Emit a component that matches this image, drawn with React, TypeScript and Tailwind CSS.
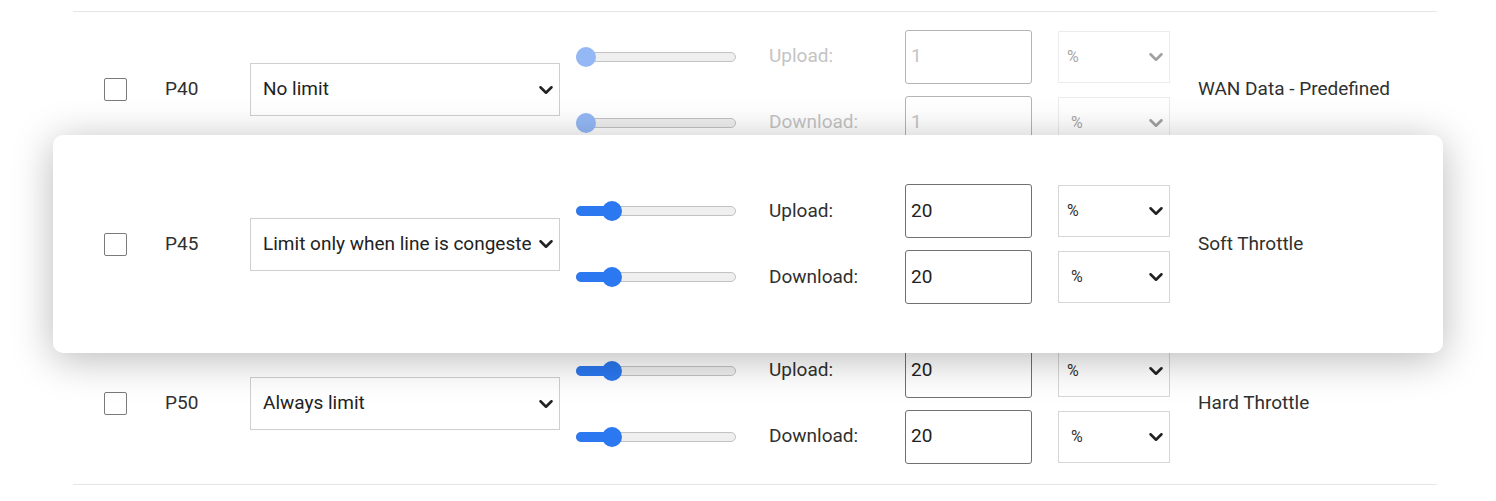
import { ChevronDown } from 'lucide-react'

type Sub = { label: string; value: string; pct: number }

type Row = {
  id: string
  mode: string
  desc: string
  muted?: boolean
  subs: Sub[]
}

const ROWS: Row[] = [
  {
    id: 'P40',
    mode: 'No limit',
    desc: 'WAN Data - Predefined',
    muted: true,
    subs: [
      { label: 'Upload:', value: '1', pct: 0 },
      { label: 'Download:', value: '1', pct: 0 },
    ],
  },
  {
    id: 'P45',
    mode: 'Limit only when line is congested',
    desc: 'Soft Throttle',
    subs: [
      { label: 'Upload:', value: '20', pct: 20 },
      { label: 'Download:', value: '20', pct: 20 },
    ],
  },
  {
    id: 'P50',
    mode: 'Always limit',
    desc: 'Hard Throttle',
    subs: [
      { label: 'Upload:', value: '20', pct: 20 },
      { label: 'Download:', value: '20', pct: 20 },
    ],
  },
]

function Slider({ pct, muted }: { pct: number; muted?: boolean }) {
  // thumb center sits 10px from the track start at 0%
  const x = 10 + (130 * pct) / 100
  return (
    <div className="relative w-[160px] h-[20px] flex items-center">
      <div className="w-full h-[10px] rounded-full border border-[#c2c2c2] bg-[#efefef]" />
      {!muted && (
        <div
          className="absolute left-0 h-[10px] rounded-l-full bg-[#2b78f0]"
          style={{ width: x }}
        />
      )}
      <div
        className={`absolute top-0 w-[20px] h-[20px] rounded-full ${muted ? 'bg-[#94b8f6]' : 'bg-[#2b78f0]'}`}
        style={{ left: x - 10 }}
      />
    </div>
  )
}

function SubRow({ sub, muted, idx }: { sub: Sub; muted?: boolean; idx: number }) {
  return (
    <div className="flex items-center">
      <Slider pct={sub.pct} muted={muted} />
      <span className={`ml-[33px] w-[136px] ${muted ? 'text-[#c4c4c4]' : 'text-[#303030]'}`}>{sub.label}</span>
      <div
        className={`w-[127px] h-[54px] rounded-[3px] border flex items-center pl-[5px] ${
          muted ? 'border-[#b4b4b4] text-[#c4c4c4]' : 'border-[#707070] text-[#222]'
        }`}
      >
        {sub.value}
      </div>
      <div
        className={`ml-[26px] w-[112px] h-[52px] border flex items-center justify-between pr-[2px] ${
          idx === 0 ? 'pl-[8px]' : 'pl-[12px]'
        } ${muted ? 'border-[#ececec] text-[#a8a8a8]' : 'border-[#d6d6d6] text-[#333]'}`}
      >
        <span className="text-[16px]">%</span>
        <ChevronDown size={22} strokeWidth={2.8} className={muted ? 'text-[#a0a0a0]' : 'text-[#222]'} />
      </div>
    </div>
  )
}

function RowContent({ row }: { row: Row }) {
  return (
    <>
      <div className="w-[23px] h-[23px] border-[1.5px] border-[#7a7a7a] rounded-[2px] bg-white shrink-0" />
      <span className="ml-[38px] w-[85px] text-[#303030]">{row.id}</span>
      <div className="w-[310px] h-[53px] border border-[#cfcfcf] bg-white flex items-center pl-[12px] pr-[2px] shrink-0">
        <span className="flex-1 overflow-hidden whitespace-nowrap text-[#222]">{row.mode}</span>
        <ChevronDown size={22} strokeWidth={2.8} className="text-[#222] ml-[4px] shrink-0" />
      </div>
      <div className="ml-[16px] flex flex-col gap-[12px]">
        {row.subs.map((s, i) => (
          <SubRow key={i} sub={s} muted={row.muted} idx={i} />
        ))}
      </div>
      <span className="ml-[28px] text-[#303030]">{row.desc}</span>
    </>
  )
}

export default function App() {
  return (
    <div
      className="w-[1496px] h-[501px] bg-white overflow-hidden text-[19px]"
      style={{ fontFamily: 'Roboto, "Noto Sans", sans-serif' }}
    >
      <div className="ml-[73px] w-[1364px] mt-[11px] border-t border-b border-[#e6e6e6]">
        <div className="h-[155px] flex items-center pl-[31px]">
          <RowContent row={ROWS[0]} />
        </div>
        <div className="relative z-10 h-[218px] -mt-[32px] -mb-[30px] -ml-[20px] -mr-[6px] rounded-[10px] bg-white shadow-[0_6px_40px_rgba(0,0,0,0.28)] flex items-center pl-[51px]">
          <RowContent row={ROWS[1]} />
        </div>
        <div className="h-[161px] flex items-center pl-[31px]">
          <RowContent row={ROWS[2]} />
        </div>
      </div>
    </div>
  )
}
